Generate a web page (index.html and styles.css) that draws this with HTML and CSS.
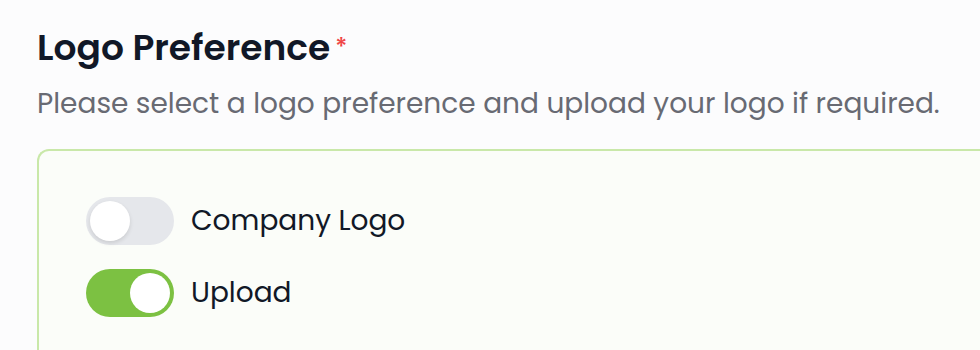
FILE: index.html
```html
<!DOCTYPE html>
<html lang="en">
<head>
    <meta charset="UTF-8">
    <meta name="viewport" content="width=device-width, initial-scale=1.0">
    <title>Logo Preference</title>
    <link rel="stylesheet" href="styles.css">
</head>
<body>
    <div class="field">
        <h2 class="field-title">Logo Preference<span class="required">*</span></h2>
        <p class="field-hint">Please select a logo preference and upload your logo if required.</p>
        <div class="options">
            <label class="option">
                <span class="toggle"><span class="knob"></span></span>
                <span class="option-label">Company Logo</span>
            </label>
            <label class="option">
                <span class="toggle on"><span class="knob"></span></span>
                <span class="option-label">Upload</span>
            </label>
        </div>
    </div>
</body>
</html>
```

FILE: styles.css
```css
body {
    font-family: Poppins, Inter, "Noto Sans", sans-serif;
    background-color: #fcfcfd;
    margin: 0;
    padding: 0;
    height: 100vh;
    overflow: hidden;
}
.field {
    padding: 24px 0 0 37px;
}
.field-title {
    margin: 0;
    font-size: 36px;
    font-weight: 600;
    color: #111827;
    line-height: 48px;
    display: flex;
    align-items: flex-start;
}
.required {
    color: #ef4444;
    font-size: 24px;
    font-weight: 500;
    margin-left: 5px;
    line-height: 48px;
}
.field-hint {
    margin: 12px 0 0;
    font-size: 28px;
    color: #686a73;
    line-height: 40px;
}
.options {
    margin-top: 25px;
    border: 2px solid #c9e8a9;
    border-right: none;
    border-bottom: none;
    border-radius: 12px 0 0 0;
    background: #fbfdf9;
    padding: 46px 47px 48px;
    display: flex;
    flex-direction: column;
    gap: 24px;
}
.option {
    display: flex;
    align-items: center;
    gap: 17px;
}
.toggle {
    width: 88px;
    height: 48px;
    border-radius: 24px;
    background: #e5e7eb;
    display: flex;
    align-items: center;
    padding: 0 4px;
    box-sizing: border-box;
}
.toggle.on {
    background: #7cc142;
    justify-content: flex-end;
}
.knob {
    width: 40px;
    height: 40px;
    border-radius: 50%;
    background: #ffffff;
    box-shadow: 0 2px 4px rgba(0, 0, 0, 0.12);
}
.toggle.on .knob {
    box-shadow: none;
}
.option-label {
    font-size: 28px;
    color: #111827;
}
```
